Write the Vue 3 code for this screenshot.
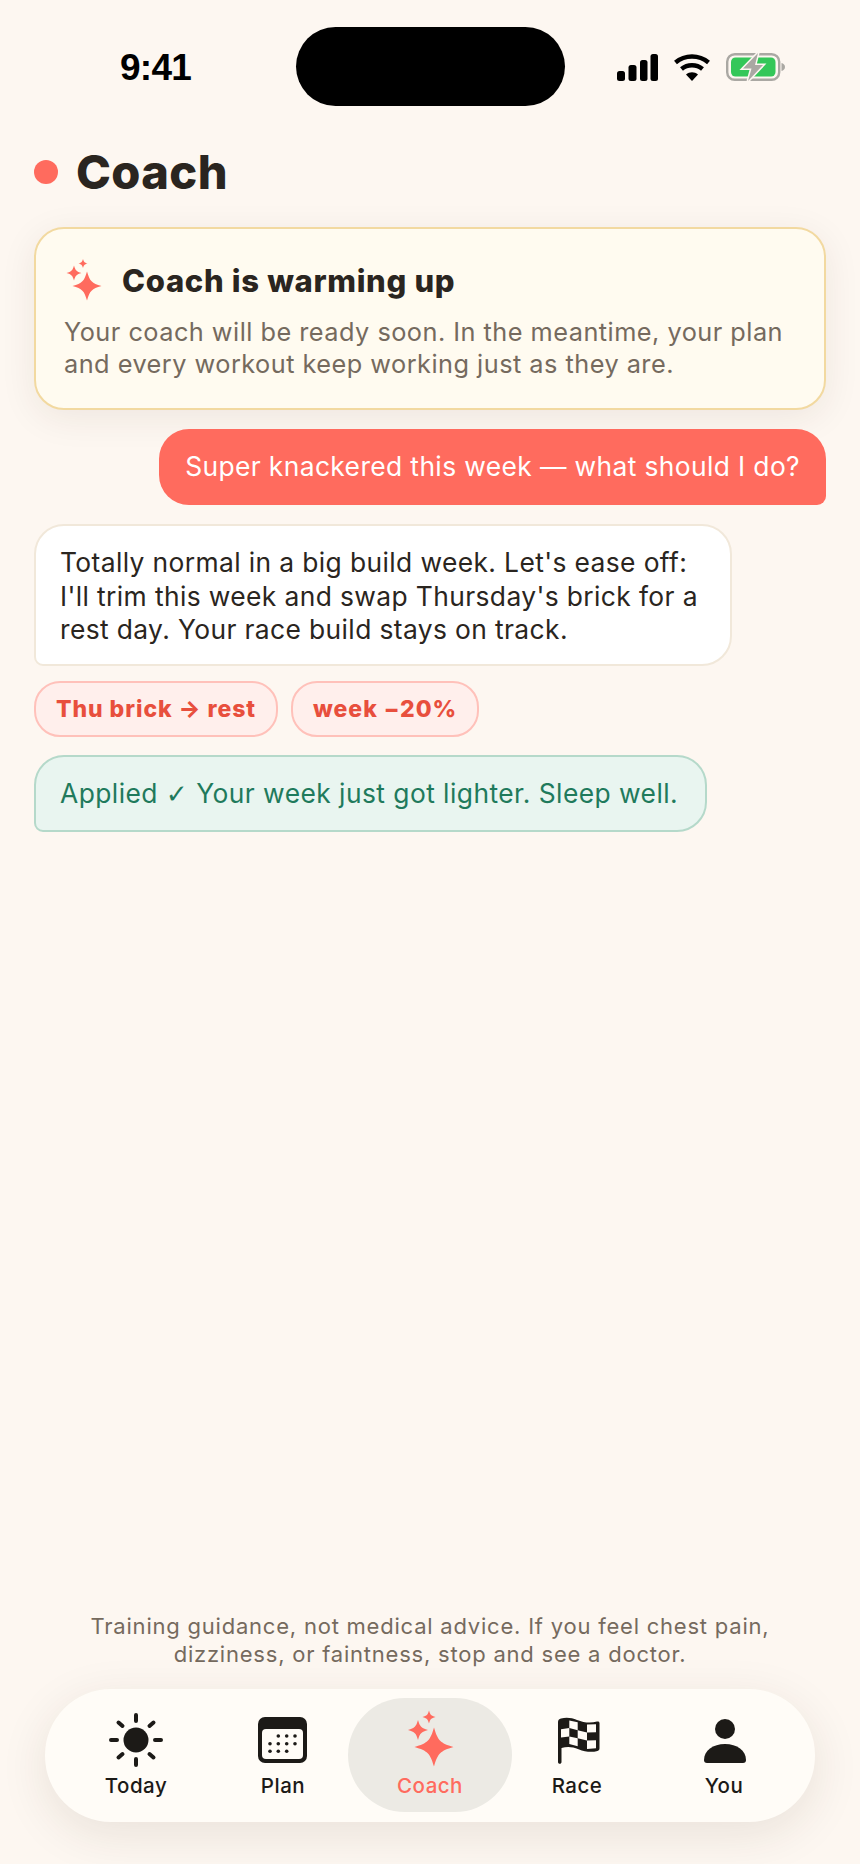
<script setup>
const star = (cx, cy, r) => {
  const k = r * 0.2
  const m = r * 0.32
  return `M${cx} ${cy - r}C${cx + k} ${cy - m} ${cx + m} ${cy - k} ${cx + r} ${cy}C${cx + m} ${cy + k} ${cx + k} ${cy + m} ${cx} ${cy + r}C${cx - k} ${cy + m} ${cx - m} ${cy + k} ${cx - r} ${cy}C${cx - m} ${cy - k} ${cx - k} ${cy - m} ${cx} ${cy - r}Z`
}
const noticeStars = star(23, 27, 14.5) + star(10, 14, 7.5) + star(19, 4.500, 4.500)
const coachStars = star(31, 35, 19.5) + star(15, 18, 10) + star(26, 5, 6.500)
const calDots = [
  [30.700, 24], [22.300, 24], [39, 24],
  [14, 31.700], [22.300, 31.700], [30.700, 31.700], [39, 31.700],
  [14, 39.300], [22.300, 39.300], [30.700, 39.300],
]
const checks = [
  'M19.300 8.500l8.400 1.700v8l-8.400-2.200z',
  'M37 12.500l9-.300v8l-9 .300z',
  'M11 17.200l8.300-1.200v8.400l-8.300 1z',
  'M27.700 18.200l9.300 2.300v8l-9.300-2.300z',
  'M19.300 24.400l8.400 1.800v8l-8.400-2.200z',
  'M37 28.500l9-.300v8l-9 .800z',
]
</script>

<template>
  <div class="screen">
    <header class="status">
      <span class="time">9:41</span>
      <div class="island"></div>
      <div class="status-icons">
        <svg width="41" height="27" viewBox="0 0 41 27">
          <rect x="0" y="17" width="8" height="10" rx="2.500" />
          <rect x="11.500" y="11" width="8" height="16" rx="2.500" />
          <rect x="23" y="6" width="7.500" height="21" rx="2.500" />
          <rect x="33.500" y="0" width="7.500" height="27" rx="2.500" />
        </svg>
        <svg width="36" height="27" viewBox="0 0 36 27">
          <path d="M1.500 8.500C11 .5 25 .5 34.500 8.500" fill="none" stroke="#000" stroke-width="4.500" />
          <path d="M7.500 15c6-5 15-5 21 0" fill="none" stroke="#000" stroke-width="4.500" />
          <path d="M12 20.500c3.500-3 8.500-3 12 0L18 27z" />
        </svg>
        <svg width="59" height="28" viewBox="0 0 59 28">
          <rect x="1.200" y="1.200" width="52" height="25.600" rx="7.500" fill="none" stroke="#aaa8a3" stroke-width="2.400" />
          <rect x="5" y="4.500" width="44.500" height="19" rx="4.500" fill="#34c759" />
          <path d="M55.500 10v8c2-.6 3.500-2 3.500-4s-1.500-3.400-3.500-4z" fill="#aaa8a3" />
          <path d="M32 0 17 15.500h8.500L22 28l15-16h-8z" fill="#aaa8a3" stroke="#fdf7f1" stroke-width="3" paint-order="stroke" />
        </svg>
      </div>
    </header>

    <h1 class="title"><span class="dot"></span>Coach</h1>

    <main class="thread">
      <section class="notice">
        <div class="notice-head">
          <svg width="40" height="44" viewBox="0 0 40 44"><path :d="noticeStars" fill="#ff6b5e" /></svg>
          <h2>Coach is warming up</h2>
        </div>
        <p>Your coach will be ready soon. In the meantime, your plan and every workout keep working just as they are.</p>
      </section>

      <div class="bubble user">Super knackered this week — what should I do?</div>
      <div class="bubble coach">Totally normal in a big build week. Let's ease off: I'll trim this week and swap Thursday's brick for a rest day. Your race build stays on track.</div>
      <div class="chips">
        <span class="chip">Thu brick → rest</span>
        <span class="chip">week −20%</span>
      </div>
      <div class="bubble applied">Applied <span class="tick">✓</span> Your week just got lighter. Sleep well.</div>
    </main>

    <p class="disclaimer">Training guidance, not medical advice. If you feel chest pain,<br />dizziness, or faintness, stop and see a doctor.</p>

    <nav class="tabs">
      <div class="tab">
        <svg width="54" height="54" viewBox="0 0 54 54">
          <circle cx="27" cy="28" r="12.500" fill="#1c1a17" />
          <path stroke="#1c1a17" stroke-width="4" stroke-linecap="round" d="M27 3v6M27 47v6M2 28h6M46 28h6M9.500 10.500l4 3.500M40.500 14l4-3.500M9.500 45.500l4-3.500M40.500 42l4 3.500" />
        </svg>
        <span>Today</span>
      </div>
      <div class="tab">
        <svg width="54" height="54" viewBox="0 0 54 54">
          <rect x="2" y="5" width="49" height="46" rx="7" fill="#1c1a17" />
          <rect x="6" y="17" width="41" height="30" rx="4" fill="#fffcf7" />
          <circle v-for="(d, i) in calDots" :key="i" :cx="d[0]" :cy="d[1]" r="1.800" fill="#1c1a17" />
        </svg>
        <span>Plan</span>
      </div>
      <div class="tab active">
        <svg width="54" height="54" viewBox="0 0 54 54"><path :d="coachStars" fill="#ff6b5e" /></svg>
        <span>Coach</span>
      </div>
      <div class="tab">
        <svg width="54" height="54" viewBox="0 0 54 54">
          <path fill="#1c1a17" d="M8 10c0-2 1-3 3-3.500 6-1.500 11-.5 16 1.500 7 2.800 14 3.300 20 1.500 1.500-.4 2.500.3 2.500 1.700v25c0 1.500-.6 2.300-2 2.700-6 1.800-12 1-19-1.700-6-2.300-11-2.800-17-1.200V50c0 1-.7 1.800-1.700 1.800S8 51 8 50z" />
          <path v-for="(c, i) in checks" :key="i" :d="c" fill="#fffcf7" />
        </svg>
        <span>Race</span>
      </div>
      <div class="tab">
        <svg width="54" height="54" viewBox="0 0 54 54">
          <circle cx="28" cy="17" r="10" fill="#1c1a17" />
          <path fill="#1c1a17" d="M7 48c0-9.500 9-16 21-16s21 6.500 21 16c0 2-1 3-3 3H10c-2 0-3-1-3-3z" />
        </svg>
        <span>You</span>
      </div>
    </nav>
  </div>
</template>

<style scoped>
.screen {
  width: 860px;
  height: 1864px;
  background: #fdf7f1;
  display: flex;
  flex-direction: column;
  font-family: Inter, "Liberation Sans", sans-serif;
  color: #2a2520;
  overflow: hidden;
}
.status {
  height: 132px;
  display: flex;
  align-items: center;
  padding: 0 0 0 120px;
  box-sizing: border-box;
  flex: none;
}
.time {
  font-family: "Liberation Sans", sans-serif;
  font-weight: 700;
  font-size: 37px;
  letter-spacing: -0.75px;
  color: #000;
  width: 176px;
  padding-top: 4px;
}
.island {
  width: 269px;
  height: 79px;
  border-radius: 40px;
  background: #000;
}
.status-icons {
  display: flex;
  align-items: center;
  margin-left: 52px;
  margin-top: 2px;
  gap: 16px;
}
.title {
  margin: 12px 0 0 34px;
  display: flex;
  align-items: center;
  gap: 18px;
  font-size: 47px;
  letter-spacing: 0.4px;
  line-height: 56px;
  font-weight: 800;
  color: #2a2520;
}
.dot {
  width: 24px;
  height: 24px;
  border-radius: 50%;
  background: #ff6b5e;
}
.thread {
  flex: 1;
  padding: 27px 34px 0;
  display: flex;
  flex-direction: column;
  align-items: flex-start;
}
.notice {
  box-sizing: border-box;
  width: 792px;
  height: 183px;
  background: #fffbf0;
  border: 2px solid #f2d9a0;
  border-radius: 30px;
  padding: 30px 28px 0;
  box-shadow: 0 8px 36px rgba(60, 40, 20, 0.08);
}
.notice-head {
  display: flex;
  align-items: center;
  gap: 18px;
}
.notice-head h2 {
  margin: 0;
  font-size: 31px;
  letter-spacing: 0.68px;
  line-height: 44px;
  font-weight: 800;
  color: #2a2520;
}
.notice p {
  margin: 13px 0 0;
  font-size: 25.300px;
  letter-spacing: 0.48px;
  line-height: 32px;
  color: #756a5e;
}
.bubble {
  box-sizing: border-box;
  font-size: 26.400px;
  letter-spacing: 0.38px;
  line-height: 33.300px;
  border-radius: 30px;
}
.user {
  align-self: flex-end;
  margin-top: 19px;
  background: #ff6b5e;
  color: #fff;
  padding: 21px 26px 22px;
  border-bottom-right-radius: 9px;
}
.coach {
  margin-top: 19px;
  width: 698px;
  background: #fff;
  border: 2px solid #f1e8da;
  color: #2a2520;
  padding: 20px 24px 18px 24px;
  border-bottom-left-radius: 9px;
}
.chips {
  margin-top: 15px;
  display: flex;
  gap: 13px;
}
.chip {
  box-sizing: border-box;
  height: 56px;
  display: flex;
  align-items: center;
  padding: 0 20px;
  border-radius: 26px;
  background: #ffefec;
  border: 2px solid #ffc1ba;
  color: #e84f3d;
  font-size: 23px;
  letter-spacing: 0.95px;
  font-weight: 800;
}
.applied {
  margin-top: 18px;
  background: #e9f5f0;
  border: 2px solid #b5d9ca;
  color: #1f7a5c;
  padding: 20px 27px 20px 24px;
  border-bottom-left-radius: 9px;
  letter-spacing: 0.44px;
}
.tick {
  font-family: "DejaVu Sans", sans-serif;
}
.disclaimer {
  margin: 0;
  text-align: center;
  font-size: 22px;
  letter-spacing: 0.78px;
  line-height: 28px;
  color: #756a5e;
  flex: none;
}
.tabs {
  flex: none;
  box-sizing: border-box;
  margin: 21px 45px 42px;
  height: 133px;
  border-radius: 66px;
  background: #fffcf7;
  box-shadow: 0 12px 48px rgba(60, 40, 20, 0.1);
  padding-top: 9px;
  display: grid;
  grid-template-columns: repeat(5, 147px);
  justify-content: center;
  justify-items: center;
}
.tab {
  width: 147px;
  height: 114px;
  border-radius: 57px;
  display: flex;
  flex-direction: column;
  align-items: center;
  padding-top: 14px;
  box-sizing: border-box;
  font-size: 20.500px;
  letter-spacing: 0.5px;
  font-weight: 500;
  line-height: 24px;
  color: #1c1a17;
}
.tab svg {
  margin-bottom: 8px;
  overflow: visible;
  flex: none;
}
.tab.active {
  width: 164px;
  background: #eceae4;
  color: #ff6b5e;
}
</style>
<style>
body {
  background: #fdf7f1;
}
</style>
